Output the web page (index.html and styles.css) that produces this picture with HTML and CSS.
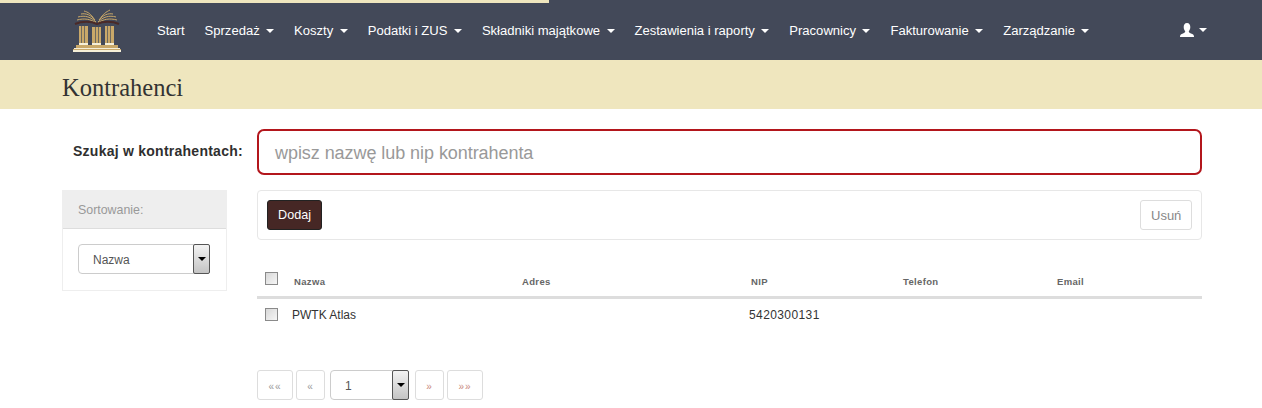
FILE: index.html
```html
<!DOCTYPE html>
<html lang="pl">
<head>
<meta charset="utf-8">
<title>Kontrahenci</title>
<link rel="stylesheet" href="styles.css">
</head>
<body>
<div class="progress"></div>
<nav class="navbar">
  <svg class="logo" width="50" height="44" viewBox="0 0 50 44">
    <g fill="none" stroke="#c9a869" stroke-width="1">
      <path d="M24 14C19 10 12 9 5 11M24 13C19 8 13 6 6 8M23 11C19 6 14 4 9 5M22 10C19 5 16 3 12 2"/>
      <path d="M26 14C31 10 38 9 45 11M26 13C31 8 37 6 44 8M27 11C31 6 36 4 41 5M28 10C31 5 34 3 38 1"/>
    </g>
    <path d="M3 15C10 12 19 12 25 15C31 12 40 12 47 15" fill="none" stroke="#4a2a28" stroke-width="2"/>
    <g fill="#c9a869">
      <rect x="7" y="17" width="9" height="17"/>
      <rect x="20" y="18" width="9" height="16"/>
      <rect x="33" y="17" width="9" height="17"/>
      <rect x="4" y="36" width="42" height="3"/>
      <rect x="1" y="40" width="48" height="1"/>
    </g>
    <g fill="#6f6a5e">
      <rect x="9" y="17" width="1" height="17"/><rect x="12" y="17" width="1" height="17"/>
      <rect x="23" y="18" width="1" height="16"/><rect x="26" y="18" width="1" height="16"/>
      <rect x="35" y="17" width="1" height="17"/><rect x="38" y="17" width="1" height="17"/>
    </g>
    <g fill="#f6efd8">
      <rect x="7" y="34" width="9" height="2"/><rect x="20" y="34" width="9" height="2"/><rect x="33" y="34" width="9" height="2"/>
      <rect x="2" y="39" width="46" height="1"/><rect x="1" y="41" width="48" height="2"/>
    </g>
  </svg>
  <ul class="menu">
    <li>Start</li>
    <li>Sprzedaż <i class="caret"></i></li>
    <li>Koszty <i class="caret"></i></li>
    <li>Podatki i ZUS <i class="caret"></i></li>
    <li>Składniki majątkowe <i class="caret"></i></li>
    <li>Zestawienia i raporty <i class="caret"></i></li>
    <li>Pracownicy <i class="caret"></i></li>
    <li>Fakturowanie <i class="caret"></i></li>
    <li>Zarządzanie <i class="caret"></i></li>
  </ul>
  <div class="user">
    <svg width="14" height="14" viewBox="0 0 14 14"><path fill="#fff" d="M7 0C9.300 0 10.300 1.800 10.300 4C10.300 6 9.500 7.500 8.800 8.300C8.800 9.300 9.500 9.800 11 10.400C12.800 11 14 11.700 14 13.500L14 14L0 14L0 13.500C0 11.700 1.200 11 3 10.400C4.500 9.800 5.200 9.300 5.200 8.300C4.500 7.500 3.700 6 3.700 4C3.700 1.800 4.700 0 7 0Z"/></svg>
    <i class="caret"></i>
  </div>
</nav>
<header class="subheader"><h1>Kontrahenci</h1></header>
<main class="content">
  <div class="search-row">
    <label class="search-label">Szukaj w kontrahentach:</label>
    <div class="search-box">wpisz nazwę lub nip kontrahenta</div>
  </div>
  <div class="columns">
    <aside class="panel">
      <div class="panel-head">Sortowanie:</div>
      <div class="panel-body">
        <div class="select sort-select"><span>Nazwa</span><b class="select-btn"><i></i></b></div>
      </div>
    </aside>
    <section class="list">
      <div class="toolbar">
        <button class="btn primary">Dodaj</button>
        <button class="btn ghost">Usuń</button>
      </div>
      <table class="data">
        <colgroup><col class="c0"><col class="c1"><col class="c2"><col class="c3"><col class="c4"><col></colgroup>
        <thead>
          <tr><th><span class="check head-check"></span></th><th>Nazwa</th><th>Adres</th><th>NIP</th><th>Telefon</th><th>Email</th></tr>
        </thead>
        <tbody>
          <tr><td><span class="check"></span></td><td>PWTK Atlas</td><td></td><td class="nip">5420300131</td><td></td><td></td></tr>
        </tbody>
      </table>
      <div class="pager">
        <span class="page p-wide">««</span>
        <span class="page">«</span>
        <div class="select page-select"><span>1</span><b class="select-btn"><i></i></b></div>
        <span class="page next">»</span>
        <span class="page p-wide next">»»</span>
      </div>
    </section>
  </div>
</main>
</body>
</html>
```

FILE: styles.css
```css
* { box-sizing: border-box; }
html, body { margin: 0; height: 408px; overflow: hidden; }
body { font-family: "Liberation Sans", Arial, sans-serif; font-size: 12px; color: #333; background: #fff; }

.progress { position: absolute; top: 0; left: 0; width: 549px; height: 3px; background: #efe6be; }

.navbar { height: 60px; background: #434959; display: flex; align-items: center; padding-left: 72px; color: #fff; }
.logo { flex: none; margin-top: 2px; }
.menu { list-style: none; margin: 0 0 0 35px; padding: 0; display: flex; gap: 20px; font-size: 13.05px; flex: 1; }
.menu li { white-space: nowrap; }
.caret { display: inline-block; width: 0; height: 0; margin-left: 2.8px; vertical-align: middle; border-left: 4px solid transparent; border-right: 4px solid transparent; border-top: 4px solid #fff; }
.user { display: flex; align-items: center; gap: 5px; margin-right: 55px; }
.user .caret { margin-left: 0; }

.subheader { height: 49px; background: #efe6be; padding: 6px 0 0 62px; display: flex; align-items: center; }
.subheader h1 { margin: 0; font: 400 24.5px "Liberation Serif", Georgia, serif; color: #333; }

.content { padding: 20px 60px 0 62px; }
.search-row { display: flex; align-items: center; height: 46px; }
.search-label { flex: none; width: 180px; padding-left: 11px; margin-top: -2px; font-weight: 700; font-size: 14px; letter-spacing: .25px; color: #2f2f2f; white-space: nowrap; }
.search-box { margin-left: 15px; flex: 1; height: 46px; border: 2px solid #b3161c; border-radius: 7px; padding-left: 16px; line-height: 44px; font-size: 18px; letter-spacing: -.06px; color: #999; }

.columns { display: flex; gap: 30px; margin-top: 15px; align-items: flex-start; }
.panel { flex: none; width: 165px; border: 1px solid #eee; }
.panel-head { height: 38px; background: #eee; border-bottom: 1px solid #ddd; padding: 12px 15px 0; font-size: 12.4px; color: #999; }
.panel-body { padding: 15px; height: 61px; }

.select { display: flex; align-items: center; height: 30px; border: 1px solid #ccc; border-radius: 4px; font-size: 12px; position: relative; color: #555; }
.select span { flex: 1; padding: 2px 0 0 14px; }
.select-btn { flex: none; width: 17px; height: 30px; margin: -1px -1px -1px 0; border: 1px solid #555; border-radius: 2px; background: linear-gradient(#f3f3f3, #c4c4c4); display: flex; align-items: center; justify-content: center; }
.select-btn i { width: 0; height: 0; border-left: 4px solid transparent; border-right: 4px solid transparent; border-top: 4px solid #000; }
.sort-select { width: 132px; }

.list { flex: 1; min-width: 0; }
.toolbar { height: 50px; border: 1px solid #e7e7e7; border-radius: 4px; padding: 9px; display: flex; justify-content: space-between; }
.btn { height: 30px; padding: 0 10px; font: 12.6px "Liberation Sans", Arial, sans-serif; border-radius: 3px; }
.primary { background: #462725; border: 1px solid #222; color: #fff; width: 55px; }
.ghost { background: #fff; border: 1px solid #ddd; color: #888; width: 52px; font-size: 13px; }

.data { width: 945px; table-layout: fixed; border-collapse: collapse; margin-top: 22px; }
.c0 { width: 35px; } .c1 { width: 228px; } .c2 { width: 229px; } .c3 { width: 152px; } .c4 { width: 154px; }
.data th { height: 35px; padding: 6px 0 0 2px; text-align: left; font-size: 9.5px; letter-spacing: .35px; color: #666; border-bottom: 3px solid #ddd; }
.data th:first-child { padding-left: 8px; }
.data td { height: 31px; padding: 4px 0 0; font-size: 12px; color: #333; }
.data td:first-child { padding: 2px 0 0 8px; }
.data .nip { letter-spacing: .4px; }
.check { display: block; width: 13px; height: 13px; border: 1px solid #8a8a8a; background: linear-gradient(135deg, #d8d8d8, #f6f6f6); }
.head-check { margin-top: -6px; }

.pager { display: flex; gap: 3px; margin-top: 42px; align-items: flex-start; }
.page { width: 29px; height: 30px; border: 1px solid #ddd; border-radius: 3px; display: flex; align-items: center; justify-content: center; font-size: 10px; letter-spacing: 1px; color: #9a9a9a; padding-top: 2px; }
.p-wide { width: 36px; }
.next { color: #c98a80; }
.page-select { width: 79px; margin: 0 3px 0 2px; }
```
